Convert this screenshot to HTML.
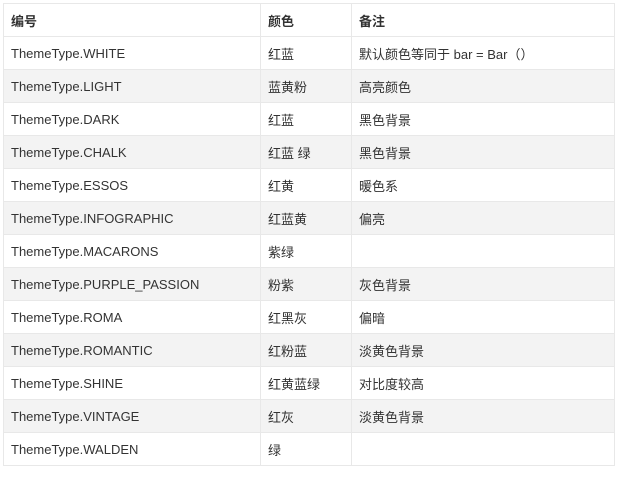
<!DOCTYPE html>
<html><head><meta charset="utf-8"><style>
body{margin:0;background:#fff;}
table{position:absolute;left:3px;top:3px;border-collapse:collapse;width:612px;font-family:"Liberation Sans","Noto Sans CJK SC",sans-serif;font-size:13px;color:#333;table-layout:fixed;}
td,th{border:1px solid #e8e8e8;height:32px;padding:0 0 0 7px;text-align:left;white-space:nowrap;}
th{font-weight:bold;}
tr:nth-child(odd) td{background:#f3f3f3;}
</style></head><body>
<table>
<colgroup><col style="width:257px"><col style="width:91px"><col></colgroup>
<tr><th>编号</th><th>颜色</th><th>备注</th></tr>
<tr><td>ThemeType.WHITE</td><td>红蓝</td><td>默认颜色等同于 bar = Bar（）</td></tr>
<tr><td>ThemeType.LIGHT</td><td>蓝黄粉</td><td>高亮颜色</td></tr>
<tr><td>ThemeType.DARK</td><td>红蓝</td><td>黑色背景</td></tr>
<tr><td>ThemeType.CHALK</td><td>红蓝 绿</td><td>黑色背景</td></tr>
<tr><td>ThemeType.ESSOS</td><td>红黄</td><td>暖色系</td></tr>
<tr><td>ThemeType.INFOGRAPHIC</td><td>红蓝黄</td><td>偏亮</td></tr>
<tr><td>ThemeType.MACARONS</td><td>紫绿</td><td></td></tr>
<tr><td>ThemeType.PURPLE_PASSION</td><td>粉紫</td><td>灰色背景</td></tr>
<tr><td>ThemeType.ROMA</td><td>红黑灰</td><td>偏暗</td></tr>
<tr><td>ThemeType.ROMANTIC</td><td>红粉蓝</td><td>淡黄色背景</td></tr>
<tr><td>ThemeType.SHINE</td><td>红黄蓝绿</td><td>对比度较高</td></tr>
<tr><td>ThemeType.VINTAGE</td><td>红灰</td><td>淡黄色背景</td></tr>
<tr><td>ThemeType.WALDEN</td><td>绿</td><td></td></tr>
</table>
</body></html>
